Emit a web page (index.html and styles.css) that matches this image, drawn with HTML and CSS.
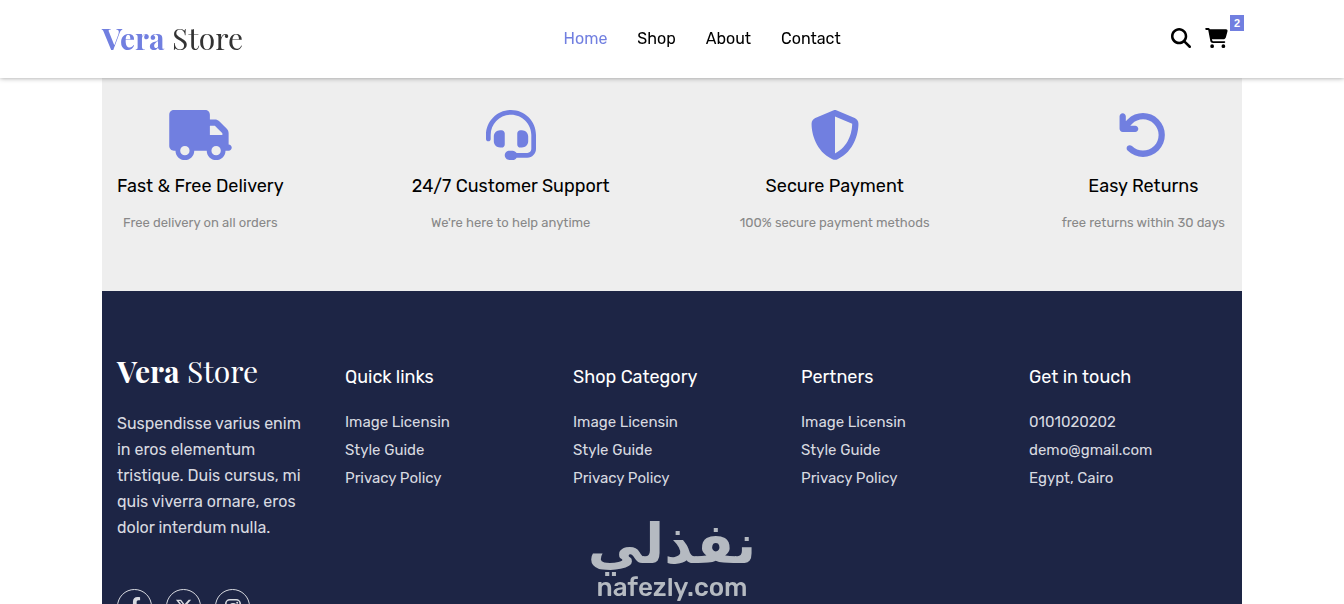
FILE: index.html
```html
<!DOCTYPE html>
<html lang="en">
<head>
    <meta charset="UTF-8">
    <meta name="viewport" content="width=device-width, initial-scale=1.0">
    <title>Vera Store</title>
    <link rel="stylesheet" href="styles.css">
</head>
<body>
    <header>
        <div class="container header-content">
            <a href="#" class="logo"><span>Vera</span> Store</a>
            <nav>
                <a href="#" class="active">Home</a>
                <a href="#">Shop</a>
                <a href="#">About</a>
                <a href="#">Contact</a>
            </nav>
            <div class="header-icons">
                <button type="button" aria-label="Search">
                    <svg viewBox="0 0 512 512" width="20" height="20"><path d="M416 208c0 45.9-14.9 88.3-40 122.7L502.6 457.4c12.5 12.5 12.5 32.8 0 45.3s-32.8 12.5-45.3 0L330.7 376c-34.4 25.2-76.8 40-122.7 40C93.1 416 0 322.9 0 208S93.1 0 208 0S416 93.1 416 208zM208 352a144 144 0 1 0 0-288 144 144 0 1 0 0 288z"/></svg>
                </button>
                <button type="button" class="cart" aria-label="Cart">
                    <svg viewBox="0 0 576 512" width="23" height="20"><path d="M24 0C10.7 0 0 10.7 0 24S10.7 48 24 48H69.500c3.800 0 7.100 2.700 7.900 6.500l51.600 271c6.500 34 36.200 58.500 70.700 58.500H488c13.300 0 24-10.700 24-24s-10.700-24-24-24H199.700c-11.500 0-21.400-8.200-23.600-19.500L170.700 288H459.200c32.600 0 61.100-21.800 69.500-53.300l41-152.300C576.600 57 557.400 32 531.100 32H120.100C111 12.800 91.600 0 69.500 0H24zM176 512a48 48 0 1 0 0-96 48 48 0 1 0 0 96zm336-48a48 48 0 1 0-96 0 48 48 0 1 0 96 0z"/></svg>
                    <span class="cart-count">2</span>
                </button>
            </div>
        </div>
    </header>

    <section class="container features">
        <div class="feature">
            <svg viewBox="0 0 640 512" width="63" height="50"><path d="M48 0C21.5 0 0 21.5 0 48V368c0 26.5 21.5 48 48 48H64c0 53 43 96 96 96s96-43 96-96H384c0 53 43 96 96 96s96-43 96-96h32c17.7 0 32-14.3 32-32s-14.3-32-32-32V288 256 237.3c0-17-6.7-33.3-18.7-45.3L512 114.7c-12-12-28.3-18.7-45.3-18.7H416V48c0-26.5-21.5-48-48-48H48zM416 160h50.7L544 237.3V256H416V160zM112 416a48 48 0 1 1 96 0 48 48 0 1 1 -96 0zm368-48a48 48 0 1 1 0 96 48 48 0 1 1 0-96z"/></svg>
            <h3>Fast &amp; Free Delivery</h3>
            <p>Free delivery on all orders</p>
        </div>
        <div class="feature">
            <svg viewBox="0 0 512 512" width="50" height="50"><path d="M256 48C141.1 48 48 141.1 48 256v40c0 13.3-10.7 24-24 24s-24-10.7-24-24V256C0 114.6 114.6 0 256 0S512 114.6 512 256V400.1c0 48.6-39.4 88-88.1 88L313.6 488c-8.3 14.3-23.8 24-41.6 24H240c-26.5 0-48-21.5-48-48s21.5-48 48-48h32c17.8 0 33.3 9.7 41.6 24l110.4 .1c22.1 0 40-17.9 40-40V256c0-114.9-93.1-208-208-208zM144 208h16c17.7 0 32 14.3 32 32V352c0 17.7-14.3 32-32 32H144c-35.3 0-64-28.7-64-64V272c0-35.3 28.7-64 64-64zm224 0c35.3 0 64 28.7 64 64v48c0 35.3-28.7 64-64 64H352c-17.7 0-32-14.3-32-32V240c0-17.7 14.3-32 32-32h16z"/></svg>
            <h3>24/7 Customer Support</h3>
            <p>We're here to help anytime</p>
        </div>
        <div class="feature">
            <svg viewBox="0 0 512 512" width="50" height="50"><path d="M256 0c4.6 0 9.2 1 13.4 2.9L457.7 82.8c22 9.3 38.4 31 38.3 57.2c-.5 99.2-41.3 280.7-213.6 363.2c-16.7 8-36.1 8-52.8 0C57.3 420.7 16.5 239.2 16 140c-.1-26.2 16.3-47.9 38.3-57.2L242.7 2.9C246.8 1 251.4 0 256 0zm0 66.8V444.8C394 378 431.1 230.1 432 141.4L256 66.8z"/></svg>
            <h3>Secure Payment</h3>
            <p>100% secure payment methods</p>
        </div>
        <div class="feature">
            <svg viewBox="0 0 512 512" width="50" height="50"><path d="M125.7 160H176c17.7 0 32 14.3 32 32s-14.3 32-32 32H48c-17.7 0-32-14.3-32-32V64c0-17.7 14.3-32 32-32s32 14.3 32 32v51.2L97.6 97.6c87.5-87.5 229.3-87.5 316.8 0s87.5 229.3 0 316.8s-229.3 87.5-316.8 0c-12.5-12.5-12.5-32.8 0-45.3s32.8-12.5 45.3 0c62.5 62.5 163.8 62.5 226.3 0s62.5-163.8 0-226.3s-163.8-62.5-226.3 0L125.7 160z"/></svg>
            <h3>Easy Returns</h3>
            <p>free returns within 30 days</p>
        </div>
    </section>

    <footer class="container">
        <div class="footer-col">
            <a href="#" class="logo"><span>Vera</span> Store</a>
            <p>Suspendisse varius enim in eros elementum tristique. Duis cursus, mi quis viverra ornare, eros dolor interdum nulla.</p>
            <div class="social">
                <a href="#" aria-label="Facebook">
                    <svg viewBox="0 0 320 512" width="12" height="19"><path d="M279.14 288l14.22-92.66h-88.91v-60.13c0-25.35 12.42-50.06 52.24-50.06h40.42V6.26S260.43 0 225.36 0c-73.22 0-121.08 44.38-121.08 124.72v70.62H22.89V288h81.39v224h100.17V288z"/></svg>
                </a>
                <a href="#" aria-label="X">
                    <svg viewBox="0 0 512 512" width="18" height="18"><path d="M389.2 48h70.6L305.6 224.2 487 464H345L233.7 318.6 106.5 464H35.8L200.7 275.5 26.8 48H172.4L272.9 180.9 389.2 48zM364.4 421.8h39.1L151.1 88h-42L364.4 421.8z"/></svg>
                </a>
                <a href="#" aria-label="Instagram">
                    <svg viewBox="0 0 16 16" width="16" height="16"><rect x="0.8" y="0.8" width="14.4" height="14.4" rx="4" fill="none" stroke="currentColor" stroke-width="1.6"/><circle cx="8" cy="8" r="3.3" fill="none" stroke="currentColor" stroke-width="1.6"/><circle cx="12.2" cy="3.8" r="1"/></svg>
                </a>
            </div>
        </div>
        <div class="footer-col">
            <h4>Quick links</h4>
            <ul>
                <li><a href="#">Image Licensin</a></li>
                <li><a href="#">Style Guide</a></li>
                <li><a href="#">Privacy Policy</a></li>
            </ul>
        </div>
        <div class="footer-col">
            <h4>Shop Category</h4>
            <ul>
                <li><a href="#">Image Licensin</a></li>
                <li><a href="#">Style Guide</a></li>
                <li><a href="#">Privacy Policy</a></li>
            </ul>
        </div>
        <div class="footer-col">
            <h4>Pertners</h4>
            <ul>
                <li><a href="#">Image Licensin</a></li>
                <li><a href="#">Style Guide</a></li>
                <li><a href="#">Privacy Policy</a></li>
            </ul>
        </div>
        <div class="footer-col">
            <h4>Get in touch</h4>
            <ul>
                <li>0101020202</li>
                <li>demo@gmail.com</li>
                <li>Egypt, Cairo</li>
            </ul>
        </div>
    </footer>

    <div class="watermark">
        <span class="watermark-ar" lang="ar" dir="rtl">نفذلي</span>
        <span class="watermark-en">nafezly.com</span>
    </div>
</body>
</html>
```
FILE: styles.css
```css
* {
    box-sizing: border-box;
    margin: 0;
    padding: 0;
}

html {
    scrollbar-width: none;
}

body {
    font-family: 'Rubik', 'Roboto', sans-serif;
    font-size: 16px;
    color: #000;
    background-color: #fff;
    padding-top: 78px;
}

a {
    color: inherit;
    text-decoration: none;
}

ul {
    list-style: none;
}

svg {
    display: block;
    fill: currentColor;
}

.container {
    width: 100%;
    max-width: 1140px;
    margin: 0 auto;
}

/* Header */
header {
    position: fixed;
    top: 0;
    left: 0;
    right: 0;
    z-index: 10;
    background-color: #fff;
    box-shadow: 0 0 5px rgba(0, 0, 0, 0.4);
}

.header-content {
    display: flex;
    justify-content: space-between;
    align-items: center;
    height: 78px;
    padding-bottom: 2px;
}

.logo {
    font-family: 'Playfair Display', 'Liberation Serif', serif;
    font-size: 30px;
    line-height: 40px;
    color: #333;
}

.logo span {
    font-weight: bold;
    color: #717fe0;
}

nav {
    display: flex;
    gap: 30px;
}

.active {
    color: #717fe0;
}

.header-icons {
    display: flex;
    gap: 14px;
    padding: 0 14px 0 10px;
}

.header-icons button {
    position: relative;
    border: none;
    background: none;
    color: #000;
    cursor: pointer;
}

.cart-count {
    position: absolute;
    top: -13px;
    right: -16px;
    width: 14px;
    background-color: #717fe0;
    color: #fff;
    font-size: 11px;
    font-weight: bold;
    line-height: 16px;
    text-align: center;
}

/* Features */
.features {
    display: flex;
    justify-content: space-between;
    padding: 32px 15px 59px;
    background-color: #eee;
}

.feature {
    display: flex;
    flex-direction: column;
    align-items: center;
}

.feature svg {
    color: #717fe0;
}

.feature h3 {
    margin-top: 14px;
    font-size: 18px;
    font-weight: normal;
    line-height: 24px;
}

.feature p {
    margin-top: 16px;
    padding: 0 2px;
    font-size: 13px;
    line-height: 18px;
    color: #888;
}

/* Footer */
footer {
    display: grid;
    grid-template-columns: repeat(5, 1fr);
    padding: 60px 0 40px;
    background-color: #1d2545;
    color: #d8dae0;
}

.footer-col {
    padding: 0 15px;
}

footer .logo {
    display: block;
    margin-bottom: 20px;
}

footer .logo,
footer .logo span {
    color: #fff;
}

.footer-col p {
    line-height: 26px;
}

.footer-col h4 {
    margin: 14px 0 19px;
    font-size: 18px;
    font-weight: normal;
    line-height: 24px;
    color: #fff;
}

.footer-col li {
    font-size: 15px;
    line-height: 28px;
}

.social {
    display: flex;
    gap: 14px;
    margin-top: 48px;
}

.social a {
    display: flex;
    align-items: center;
    justify-content: center;
    width: 35px;
    height: 35px;
    border: 1px solid #d8dae0;
    border-radius: 50%;
}

/* Watermark */
.watermark {
    position: fixed;
    left: 0;
    right: 0;
    bottom: 0;
    display: flex;
    flex-direction: column;
    align-items: center;
    color: #b5bac1;
    font-weight: bold;
    pointer-events: none;
}

.watermark-ar {
    font-family: 'DejaVu Sans', sans-serif;
    font-size: 55px;
    line-height: 56px;
}

.watermark-en {
    font-size: 26px;
    font-weight: 500;
    line-height: 32px;
}
```
